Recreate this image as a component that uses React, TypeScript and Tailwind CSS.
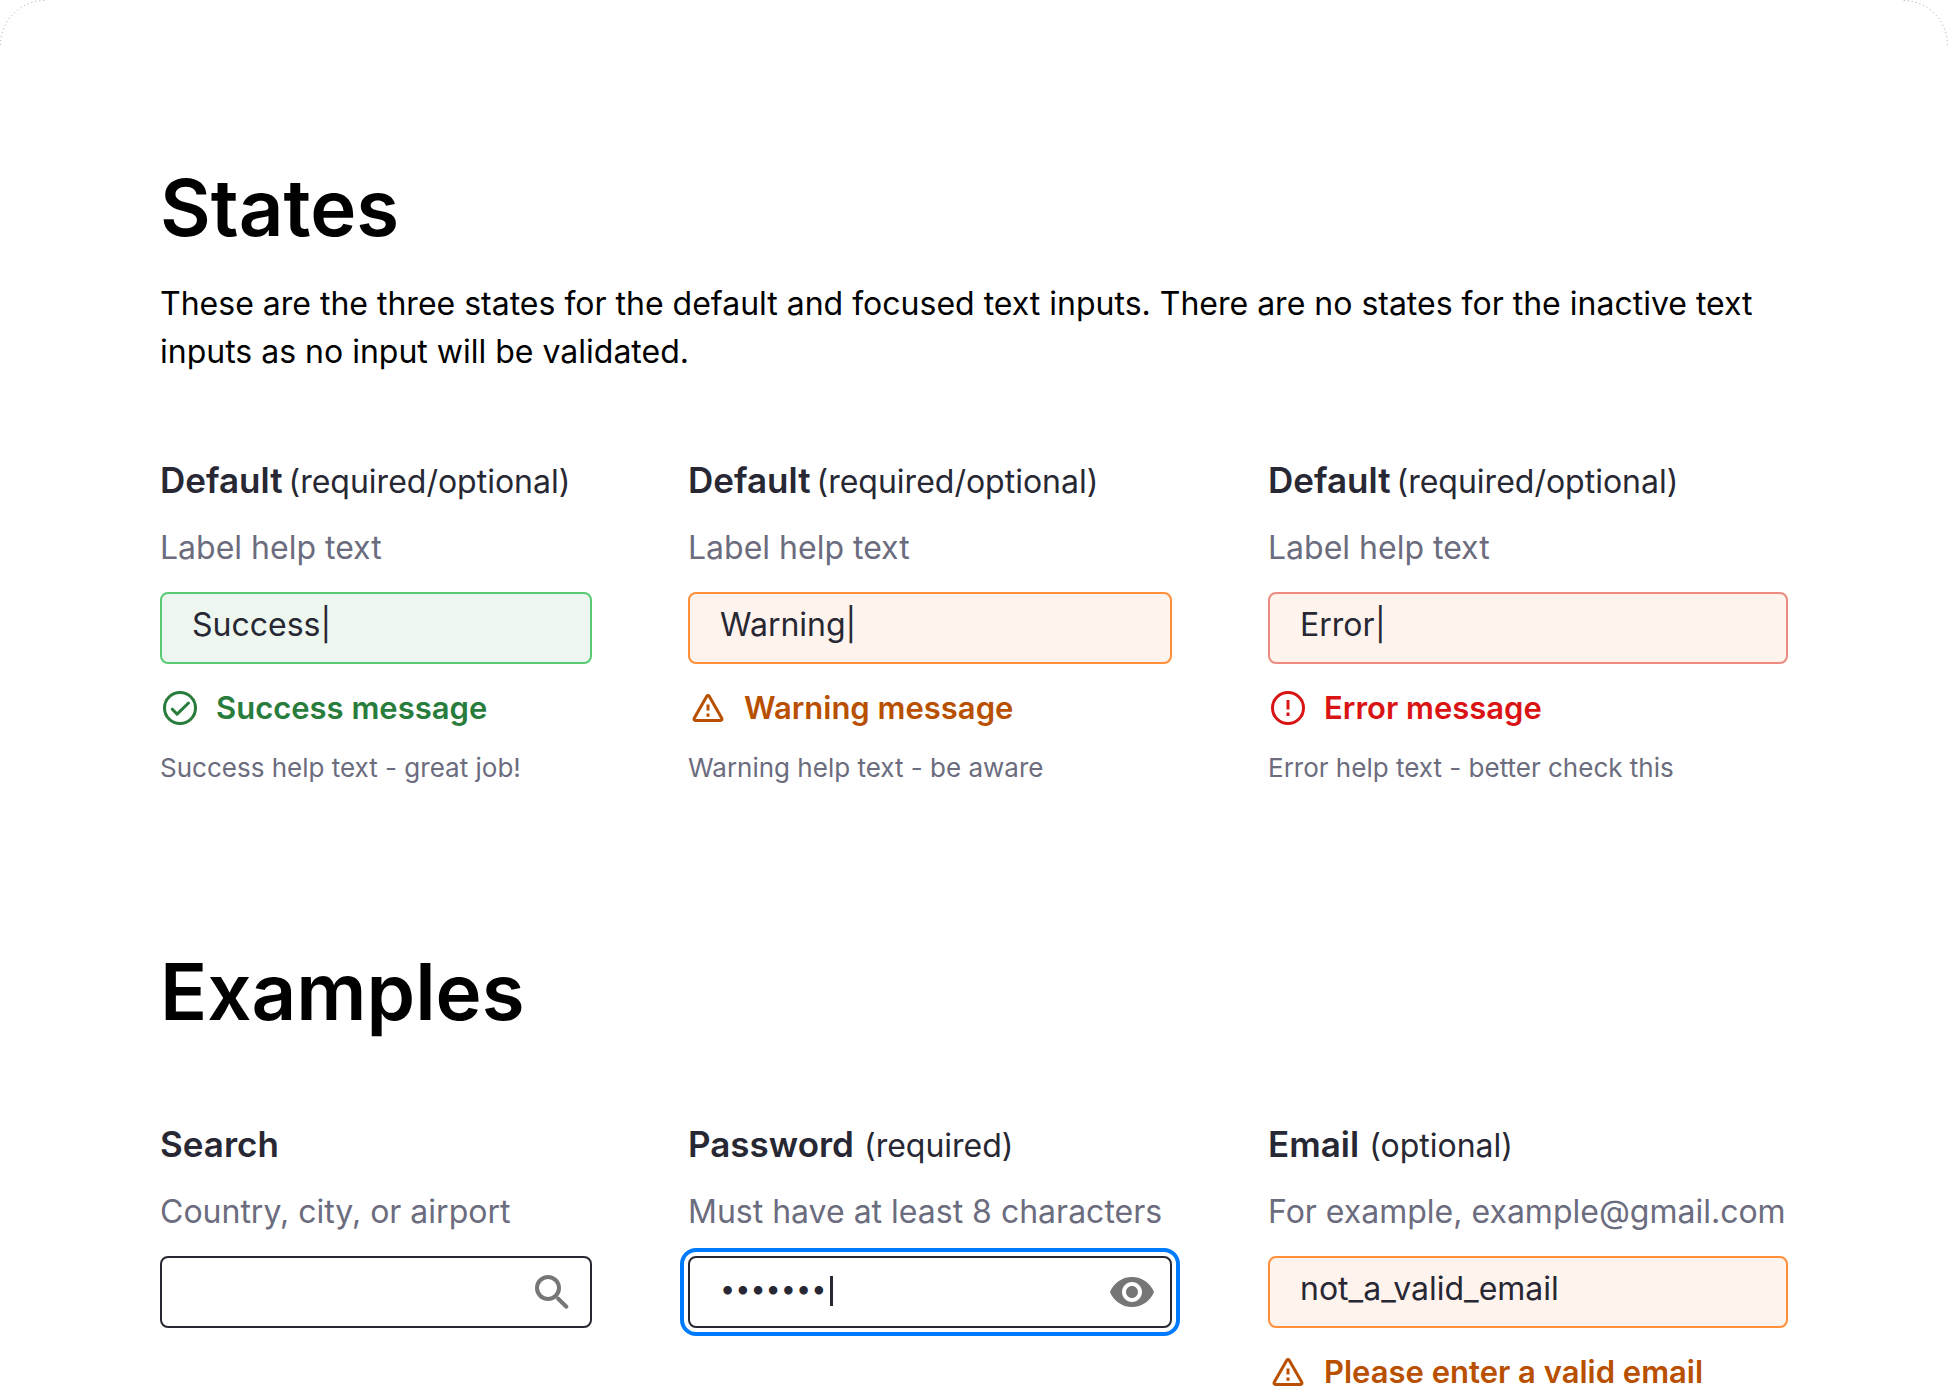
import { useId } from 'react';
import type { ReactNode } from 'react';
import { MdVisibility } from 'react-icons/md';
import clsx from 'clsx';

type Tone = 'neutral' | 'success' | 'warning' | 'error';

const boxTone: Record<Tone, string> = {
  neutral: 'border-[#272833] bg-white',
  success: 'border-[#5aca75] bg-[#edf7f0]',
  warning: 'border-[#ff8f39] bg-[#fff3ed]',
  error: 'border-[#ee8a80] bg-[#fff3ed]',
};

const messageTone: Record<Tone, string> = {
  neutral: 'text-[#272833]',
  success: 'text-[#287d3c]',
  warning: 'text-[#b95000]',
  error: 'text-[#da1414]',
};

function StatusIcon({ tone }: { tone: Tone }) {
  return (
    <svg viewBox="0 0 40 40" className="size-10 shrink-0" fill="none" stroke="currentColor" strokeWidth={3} aria-hidden="true">
      {tone === 'warning' ? (
        <path d="M18.8 8.2 6.2 30.3a1.4 1.4 0 0 0 1.2 2.1h25.2a1.4 1.4 0 0 0 1.2-2.1L21.2 8.2a1.4 1.4 0 0 0-2.4 0Z" />
      ) : (
        <circle cx="20" cy="20" r="15.5" />
      )}
      {tone === 'success' && <path d="m12.3 21.2 4.8 4.9L28.5 15" strokeLinecap="round" strokeLinejoin="round" />}
      {tone === 'warning' && <path d="M20 16.5v6M20 25.5v3.2" />}
      {tone === 'error' && <path d="M20 12v9.5M20 24.5V28" />}
    </svg>
  );
}

function SearchIcon() {
  return (
    <svg viewBox="0 0 48 48" className="size-12" fill="none" stroke="currentColor" strokeWidth={4} aria-hidden="true">
      <circle cx="20" cy="20" r="11" />
      <path d="m30.2 30.7 8.2 8" strokeLinecap="round" />
    </svg>
  );
}

interface FieldProps {
  label: string;
  note?: string;
  tightNote?: boolean;
  hint: string;
  type?: string;
  value?: string;
  tone?: Tone;
  focused?: boolean;
  message?: string;
  help?: string;
  action?: ReactNode;
}

function Field({ label, note, tightNote, hint, type = 'text', value = '', tone = 'neutral', focused, message, help, action }: FieldProps) {
  const id = useId();

  return (
    <div>
      <label
        htmlFor={id}
        className={clsx('flex h-12 items-baseline whitespace-nowrap leading-[48px]', tightNote ? 'gap-1.5' : 'gap-2.5')}
      >
        <span className="text-[35px] font-semibold">{label}</span>
        {note && <span className="text-[32px]">{note}</span>}
      </label>
      <p id={`${id}-hint`} className="mt-5 whitespace-nowrap text-[32px] leading-[48px] text-[#6b6c7e]">
        {hint}
      </p>
      <div className="relative mt-5">
        <input
          id={id}
          type={type}
          defaultValue={value}
          aria-describedby={`${id}-hint`}
          className={clsx(
            'block h-[72px] w-full rounded-lg border-2 px-[30px] pb-2 outline-none',
            type === 'password' ? 'text-[27px]' : 'text-[32px]',
            boxTone[tone],
            focused && 'outline-4 outline-offset-4 outline-[#007aff] outline-solid'
          )}
        />
        {focused && <span className="absolute left-[142px] top-5 h-[30px] w-[3px] bg-[#272833]" />}
        {action}
      </div>
      {message && (
        <p className={clsx('mt-6 flex items-center gap-4 whitespace-nowrap text-[31px] font-semibold leading-10', messageTone[tone])}>
          <StatusIcon tone={tone} />
          {message}
        </p>
      )}
      {help && <p className="mt-5 whitespace-nowrap text-[26px] leading-10 text-[#6b6c7e]">{help}</p>}
    </div>
  );
}

function FieldRow({ children }: { children: ReactNode }) {
  return (
    <div className="mt-20 grid grid-cols-[minmax(0,432fr)_minmax(0,484fr)_minmax(0,520fr)] gap-x-24">{children}</div>
  );
}

function Corner({ className }: { className: string }) {
  return (
    <svg viewBox="0 0 45 45" className={clsx('absolute top-0 size-[45px] text-gray-400', className)} fill="none" stroke="currentColor" aria-hidden="true">
      <path d="M.5 45A44.5 44.5 0 0 1 45 .5" strokeDasharray="1 3" />
    </svg>
  );
}

export default function App() {
  return (
    <main className="relative bg-white px-40 pt-40 font-['Inter',sans-serif] text-[#272833]">
      <Corner className="left-0" />
      <Corner className="right-0 -scale-x-100" />

      <section>
        <h1 className="text-[78px] font-semibold leading-[96px] text-black">States</h1>
        <p className="mt-6 text-[32px] leading-[48px] text-black">
          These are the three states for the default and focused text inputs. There are no states for the inactive text
          inputs as no input will be validated.
        </p>
        <FieldRow>
          <Field
            label="Default"
            note="(required/optional)"
            tightNote
            hint="Label help text"
            value="Success|"
            tone="success"
            message="Success message"
            help="Success help text - great job!"
          />
          <Field
            label="Default"
            note="(required/optional)"
            tightNote
            hint="Label help text"
            value="Warning|"
            tone="warning"
            message="Warning message"
            help="Warning help text - be aware"
          />
          <Field
            label="Default"
            note="(required/optional)"
            tightNote
            hint="Label help text"
            value="Error|"
            tone="error"
            message="Error message"
            help="Error help text - better check this"
          />
        </FieldRow>
      </section>

      <section className="mt-39">
        <h2 className="text-[78px] font-semibold leading-[96px] text-black">Examples</h2>
        <FieldRow>
          <Field
            label="Search"
            hint="Country, city, or airport"
            type="search"
            action={
              <button type="button" aria-label="Search" className="absolute right-4 top-3 text-[#767676]">
                <SearchIcon />
              </button>
            }
          />
          <Field
            label="Password"
            note="(required)"
            hint="Must have at least 8 characters"
            type="password"
            value="letmein"
            focused
            action={
              <button type="button" aria-label="Show password" className="absolute right-4 top-3 text-[#767676]">
                <MdVisibility className="size-12" />
              </button>
            }
          />
          <Field
            label="Email"
            note="(optional)"
            hint="For example, example@gmail.com"
            value="not_a_valid_email"
            tone="warning"
            message="Please enter a valid email"
          />
        </FieldRow>
      </section>
    </main>
  );
}
